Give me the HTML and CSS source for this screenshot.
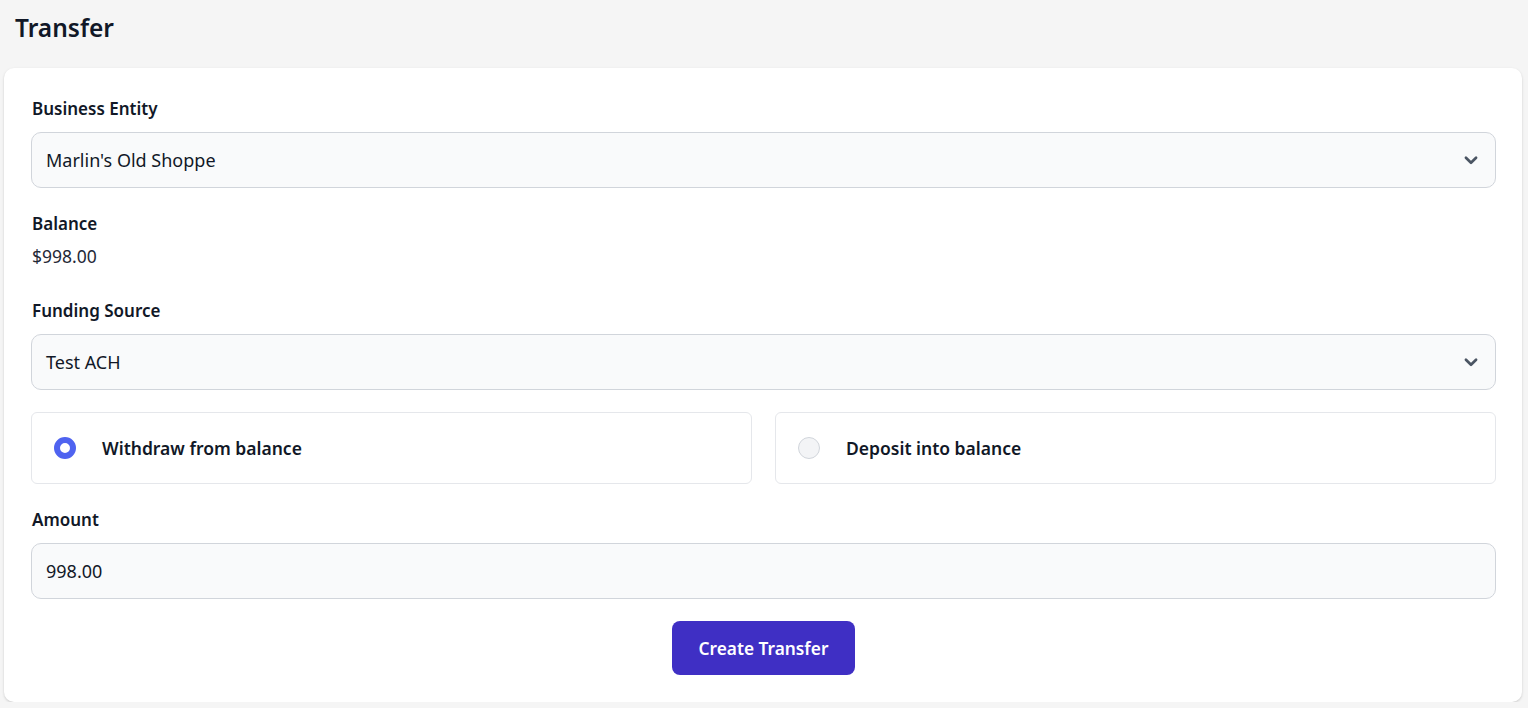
FILE: index.html
```html
<!DOCTYPE html>
<html>
<head>
<meta charset="utf-8">
<link rel="stylesheet" href="styles.css">
</head>
<body>
<div class="page">
  <h1 class="title">Transfer</h1>
  <div class="card">
    <div class="field">
      <div class="label">Business Entity</div>
      <div class="select">
        <span>Marlin's Old Shoppe</span>
        <svg class="chev" width="18" height="18" viewBox="0 0 16 16"><path d="M3.5 6l4.5 4.5L12.5 6" fill="none" stroke="#4b5563" stroke-width="2.4" stroke-linecap="round" stroke-linejoin="round"/></svg>
      </div>
    </div>
    <div class="field balance">
      <div class="label">Balance</div>
      <div class="value">$998.00</div>
    </div>
    <div class="field">
      <div class="label">Funding Source</div>
      <div class="select">
        <span>Test ACH</span>
        <svg class="chev" width="18" height="18" viewBox="0 0 16 16"><path d="M3.5 6l4.5 4.5L12.5 6" fill="none" stroke="#4b5563" stroke-width="2.4" stroke-linecap="round" stroke-linejoin="round"/></svg>
      </div>
    </div>
    <div class="radios">
      <div class="radio-card">
        <span class="radio checked"></span>
        <span class="radio-label">Withdraw from balance</span>
      </div>
      <div class="radio-card">
        <span class="radio"></span>
        <span class="radio-label">Deposit into balance</span>
      </div>
    </div>
    <div class="field">
      <div class="label">Amount</div>
      <div class="select input"><span>998.00</span></div>
    </div>
    <div class="actions">
      <button class="btn">Create Transfer</button>
    </div>
  </div>
</div>
</body>
</html>
```
FILE: styles.css
```css
* { box-sizing: border-box; }
html, body { margin: 0; padding: 0; }
body {
  background: #f5f5f5;
  font-family: "Noto Sans", "Open Sans", sans-serif;
  color: #111827;
}
.page { padding: 8px 6px 0 4px; }
.title {
  margin: 0 0 0 11px;
  font-size: 24.5px;
  font-weight: 600;
  line-height: 40px;
  color: #111827;
}
.card {
  margin-top: 20px;
  background: #fff;
  border-radius: 10px;
  box-shadow: 0 1px 3px rgba(0,0,0,0.12), 0 1px 2px rgba(0,0,0,0.06);
  padding: 28px 26px 27px 27px;
  display: flex;
  flex-direction: column;
}
.field { display: flex; flex-direction: column; margin-bottom: 22px; }
.label {
  font-size: 17px;
  font-weight: 600;
  line-height: 26px;
  margin: 0 0 10px 1px;
  color: #111827;
}
.balance { margin-top: 1px; margin-bottom: 29px; }
.balance .label { margin-bottom: 6px; }
.value { font-size: 17.5px; line-height: 26px; margin-left: 1px; color: #1f2937; }
.select {
  height: 56px;
  border: 1px solid #d1d5db;
  background: #f9fafb;
  border-radius: 10px;
  display: flex;
  align-items: center;
  justify-content: space-between;
  padding: 0 15px 0 14px;
  font-size: 18px;
  color: #111827;
}
.chev { display: block; }
.radios {
  display: grid;
  grid-template-columns: 1fr 1fr;
  gap: 23px;
  margin-bottom: 23px;
}
.radio-card {
  height: 72px;
  border: 1px solid #e5e7eb;
  border-radius: 6px;
  display: flex;
  align-items: center;
  padding-left: 22px;
}
.radio {
  width: 22px;
  height: 22px;
  border-radius: 50%;
  border: 1px solid #d1d5db;
  background: #f3f4f6;
  margin-right: 26px;
  flex: none;
}
.radio.checked {
  border: 6px solid #4f63f0;
  background: #fff;
}
.radio-label { font-size: 17.5px; font-weight: 600; color: #111827; }
.actions { display: flex; justify-content: center; }
.btn {
  width: 183px;
  height: 54px;
  border: none;
  border-radius: 8px;
  background: #3f2fc4;
  color: #fff;
  font-family: inherit;
  font-size: 17.3px;
  font-weight: 600;
}
```
